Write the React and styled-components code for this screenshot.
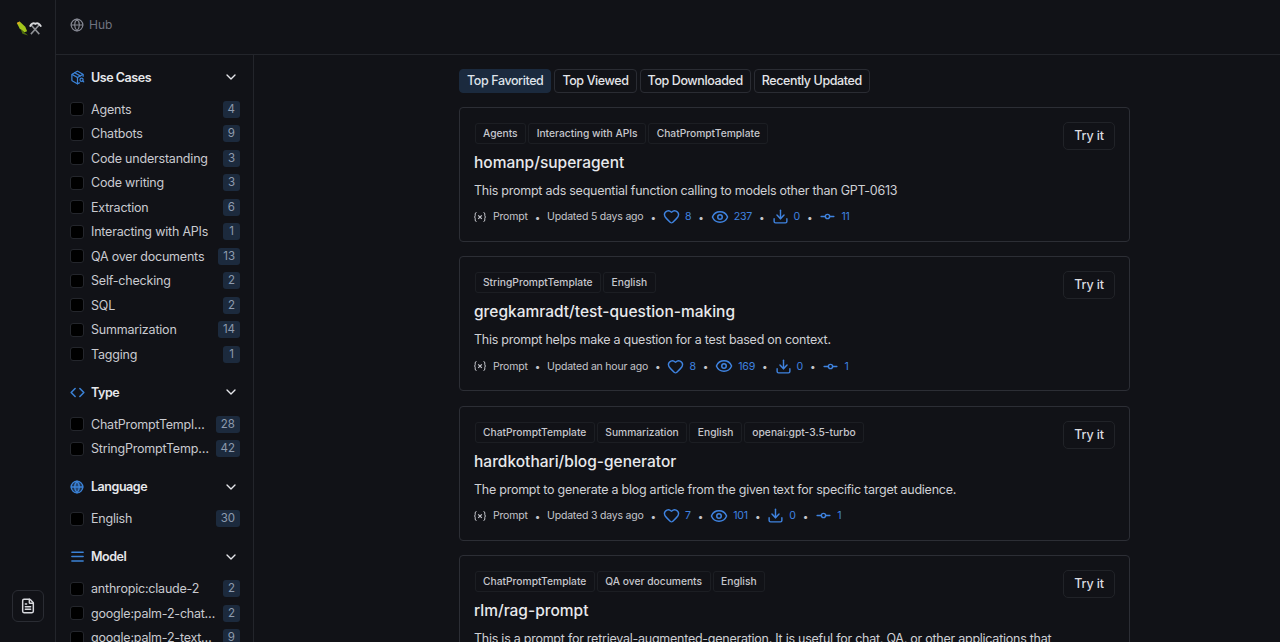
import React from "react";
import styled, { createGlobalStyle } from "styled-components";
import {
  AlignJustify,
  ChevronDown,
  ChevronsLeftRight,
  Download,
  Eye,
  FileText,
  GitCommitHorizontal,
  Globe,
  Heart,
  PackageSearch,
} from "lucide-react";

const GlobalStyle = createGlobalStyle`
  html, body {
    margin: 0;
    height: 100%;
    overflow: hidden;
    background: #111217;
    color: #e4e5e9;
    font-family: Inter, "Liberation Sans", sans-serif;
  }
`;

const Page = styled.div`
  display: flex;
  height: 642px;
  overflow: hidden;
`;

const Rail = styled.aside`
  width: 56px;
  flex: none;
  border-right: 1px solid #23252b;
  display: flex;
  flex-direction: column;
  align-items: center;
  justify-content: space-between;
  padding: 21px 0 20px;
  box-sizing: border-box;
  > svg {
    margin-left: 2px;
  }
`;

const RailButton = styled.div`
  width: 32px;
  height: 32px;
  box-sizing: border-box;
  border: 1px solid #2a2c33;
  border-radius: 6px;
  display: flex;
  align-items: center;
  justify-content: center;
  margin-left: 1px;
  color: #d8d9de;
`;

const Body = styled.div`
  flex: 1;
  display: flex;
  flex-direction: column;
  min-width: 0;
`;

const TopBar = styled.header`
  height: 55px;
  flex: none;
  box-sizing: border-box;
  border-bottom: 1px solid #23252b;
  display: flex;
  align-items: center;
  gap: 5px;
  padding: 0 0 5px 14px;
  color: #6f7280;
  font-size: 12px;
  svg {
    color: #858792;
  }
`;

const Columns = styled.div`
  flex: 1;
  display: flex;
  min-height: 0;
`;

const Sidebar = styled.nav`
  width: 198px;
  flex: none;
  box-sizing: border-box;
  border-right: 1px solid #23252b;
  padding: 12px 13px 0 14px;
  overflow: hidden;
`;

const Group = styled.section`
  margin-bottom: 15.5px;
`;

const GroupHead = styled.div`
  display: flex;
  align-items: center;
  height: 20px;
  margin-bottom: 10px;
  font-size: 12.5px;
  font-weight: 600;
  letter-spacing: -0.45px;
  color: #e6e7eb;
  span {
    flex: 1;
  }
  > svg {
    margin-right: 1px;
  }
`;

const IconSlot = styled.i`
  display: flex;
  flex: none;
  justify-content: center;
  width: 14px;
  margin-right: 7px;
  color: #3b82d6;
  svg {
    flex: none;
  }
`;

const Row = styled.div`
  display: flex;
  align-items: center;
  height: 24.5px;
  font-size: 12.5px;
  letter-spacing: -0.2px;
  color: #c9cad0;
`;

const Check = styled.span`
  width: 14px;
  height: 14px;
  flex: none;
  box-sizing: border-box;
  background: #000;
  border: 1px solid #24262c;
  border-radius: 3px;
  margin-right: 7px;
`;

const RowLabel = styled.span`
  flex: 1;
  min-width: 0;
  white-space: nowrap;
  overflow: hidden;
  text-overflow: ellipsis;
`;

const Count = styled.span`
  flex: none;
  height: 17px;
  min-width: 17px;
  padding: 0 5px;
  box-sizing: border-box;
  margin-left: 6px;
  border-radius: 3px;
  background: #1c2a3d;
  color: #8e9bae;
  font-size: 11.5px;
  letter-spacing: 0;
  line-height: 17px;
  text-align: center;
`;

const Main = styled.main`
  flex: 1;
  min-width: 0;
  overflow: hidden;
  padding: 14px 0 0 205px;
`;

const Tabs = styled.div`
  display: flex;
  gap: 3px;
  margin-bottom: 13.9px;
`;

const Tab = styled.div`
  height: 24px;
  box-sizing: border-box;
  padding: 0 7px;
  border-radius: 4px;
  border: 1px solid ${(p) => (p.$active ? "#1b2a3e" : "#2a2c33")};
  background: ${(p) => (p.$active ? "#1b2a3e" : "transparent")};
  color: ${(p) => (p.$active ? "#dfe3ea" : "#e4e5e9")};
  font-size: 12.5px;
  font-weight: 500;
  letter-spacing: -0.4px;
  line-height: 22px;
`;

const List = styled.div`
  display: flex;
  flex-direction: column;
  gap: 14.5px;
  width: 671px;
`;

const Card = styled.article`
  box-sizing: border-box;
  height: 135px;
  flex: none;
  display: flex;
  align-items: flex-start;
  justify-content: space-between;
  padding: 14px 14px 0 14px;
  border: 1px solid #2c2e35;
  border-radius: 4px;
`;

const CardText = styled.div`
  min-width: 0;
`;

const Tags = styled.div`
  display: flex;
  gap: 2px;
  margin: 1px 0 8px 0.5px;
`;

const Tag = styled.span`
  height: 21px;
  box-sizing: border-box;
  padding: 0 7.5px;
  border: 1px solid #1c1e23;
  border-radius: 3px;
  font-size: 10.25px;
  font-weight: 500;
  line-height: 19px;
  color: #c6c7cd;
`;

const Title = styled.h2`
  margin: 0 0 7px;
  font-size: 15.5px;
  font-weight: 500;
  line-height: 22px;
  color: #e8e9ec;
`;

const Desc = styled.p`
  margin: 0 0 7px;
  font-size: 12.5px;
  letter-spacing: -0.25px;
  line-height: 20px;
  color: #cfd0d5;
  width: 590px;
`;

const Meta = styled.div`
  display: flex;
  align-items: center;
  height: 18px;
  font-size: 10.5px;
  letter-spacing: -0.2px;
  color: #c4c5cb;
  white-space: nowrap;
`;

const Dot = styled.span`
  margin: 0 7px;
  font-size: 10px;
  color: #c4c5cb;
`;

const Stat = styled.span`
  display: inline-flex;
  align-items: center;
  gap: 5px;
  font-size: 10.6px;
  color: #3f83e0;
`;

const Kind = styled.span`
  display: inline-flex;
  align-items: center;
  gap: 7px;
`;

const TryButton = styled.div`
  height: 28px;
  flex: none;
  box-sizing: border-box;
  padding: 0 10px;
  border: 1px solid #212328;
  border-radius: 5px;
  font-size: 12.5px;
  font-weight: 500;
  letter-spacing: -0.1px;
  line-height: 26px;
  color: #dcdde1;
`;

const Logo = () => (
  <svg width="28" height="15" viewBox="0 0 28 16">
    <path d="M1 2 L4 0.5 L10 6 L12 11 L9 12 L4 8 Z" fill="#a3c61c" />
    <path d="M5 8.5 L9 12 L13 15.5 L7 13.5 Z" fill="#4f6d10" />
    <path d="M1 2 L4 0.5 L3.5 4 Z" fill="#e8a321" />
    <path d="M16 4 L25 14 M25 4 L16 14" stroke="#8f9196" strokeWidth="1.6" />
    <path d="M15 6 Q17 1 21 3 Q24 1 27 6" stroke="#d8d9dc" strokeWidth="2" fill="none" />
  </svg>
);

const VarIcon = () => (
  <svg width="12" height="12" viewBox="0 0 12 12" fill="none" stroke="currentColor" strokeWidth="1">
    <path d="M2.5 1.5 Q1.2 1.5 1.2 3 L1.2 4.8 Q1.2 6 0.4 6 Q1.2 6 1.2 7.2 L1.2 9 Q1.2 10.5 2.5 10.5" />
    <path d="M9.5 1.5 Q10.8 1.5 10.8 3 L10.8 4.8 Q10.8 6 11.6 6 Q10.8 6 10.8 7.2 L10.8 9 Q10.8 10.5 9.5 10.5" />
    <path d="M4.2 4.3 L7.8 7.9 M7.8 4.3 L4.2 7.9" strokeWidth="1.2" />
  </svg>
);

const filters = [
  {
    title: "Use Cases",
    Icon: PackageSearch,
    iconProps: { size: 15 },
    items: [
      ["Agents", 4],
      ["Chatbots", 9],
      ["Code understanding", 3],
      ["Code writing", 3],
      ["Extraction", 6],
      ["Interacting with APIs", 1],
      ["QA over documents", 13],
      ["Self-checking", 2],
      ["SQL", 2],
      ["Summarization", 14],
      ["Tagging", 1],
    ],
  },
  {
    title: "Type",
    Icon: ChevronsLeftRight,
    iconProps: { size: 19 },
    items: [
      ["ChatPromptTemplate", 28],
      ["StringPromptTemplate", 42],
    ],
  },
  {
    title: "Language",
    Icon: Globe,
    iconProps: { size: 14, strokeWidth: 2.3, fill: "rgba(59,130,214,0.3)" },
    items: [["English", 30]],
  },
  {
    title: "Model",
    Icon: AlignJustify,
    iconProps: { size: 15, strokeWidth: 2.4 },
    items: [
      ["anthropic:claude-2", 2],
      ["google:palm-2-chat-bison", 2],
      ["google:palm-2-text-bison", 9],
    ],
  },
];

const prompts = [
  {
    tags: ["Agents", "Interacting with APIs", "ChatPromptTemplate"],
    title: "homanp/superagent",
    desc: "This prompt ads sequential function calling to models other than GPT-0613",
    updated: "Updated 5 days ago",
    stats: [8, 237, 0, 11],
  },
  {
    tags: ["StringPromptTemplate", "English"],
    title: "gregkamradt/test-question-making",
    desc: "This prompt helps make a question for a test based on context.",
    updated: "Updated an hour ago",
    stats: [8, 169, 0, 1],
  },
  {
    tags: ["ChatPromptTemplate", "Summarization", "English", "openai:gpt-3.5-turbo"],
    title: "hardkothari/blog-generator",
    desc: "The prompt to generate a blog article from the given text for specific target audience.",
    updated: "Updated 3 days ago",
    stats: [7, 101, 0, 1],
  },
  {
    tags: ["ChatPromptTemplate", "QA over documents", "English"],
    title: "rlm/rag-prompt",
    desc: "This is a prompt for retrieval-augmented-generation. It is useful for chat, QA, or other applications that",
    updated: "Updated 2 days ago",
    stats: [5, 90, 0, 1],
  },
];

const statIcons = [
  [Heart, 17],
  [Eye, 18],
  [Download, 17],
  [GitCommitHorizontal, 17],
];

const App = () => {
  return (
    <Page>
      <GlobalStyle />
      <Rail>
        <Logo />
        <RailButton>
          <FileText size={16} strokeWidth={2.2} />
        </RailButton>
      </Rail>
      <Body>
        <TopBar>
          <Globe size={14} />
          Hub
        </TopBar>
        <Columns>
          <Sidebar>
            {filters.map(({ title, Icon, iconProps, items }) => (
              <Group key={title}>
                <GroupHead>
                  <IconSlot>
                    <Icon {...iconProps} />
                  </IconSlot>
                  <span>{title}</span>
                  <ChevronDown size={16} />
                </GroupHead>
                {items.map(([label, count]) => (
                  <Row key={label}>
                    <Check />
                    <RowLabel>{label}</RowLabel>
                    <Count>{count}</Count>
                  </Row>
                ))}
              </Group>
            ))}
          </Sidebar>
          <Main>
            <Tabs>
              <Tab $active>Top Favorited</Tab>
              <Tab>Top Viewed</Tab>
              <Tab>Top Downloaded</Tab>
              <Tab>Recently Updated</Tab>
            </Tabs>
            <List>
              {prompts.map((p) => (
                <Card key={p.title}>
                  <CardText>
                    <Tags>
                      {p.tags.map((t) => (
                        <Tag key={t}>{t}</Tag>
                      ))}
                    </Tags>
                    <Title>{p.title}</Title>
                    <Desc>{p.desc}</Desc>
                    <Meta>
                      <Kind>
                        <VarIcon />
                        Prompt
                      </Kind>
                      <Dot>•</Dot>
                      {p.updated}
                      {p.stats.map((n, i) => {
                        const [StatIcon, size] = statIcons[i];
                        return (
                          <React.Fragment key={i}>
                            <Dot>•</Dot>
                            <Stat>
                              <StatIcon size={size} />
                              {n}
                            </Stat>
                          </React.Fragment>
                        );
                      })}
                    </Meta>
                  </CardText>
                  <TryButton>Try it</TryButton>
                </Card>
              ))}
            </List>
          </Main>
        </Columns>
      </Body>
    </Page>
  );
};

export default App;
